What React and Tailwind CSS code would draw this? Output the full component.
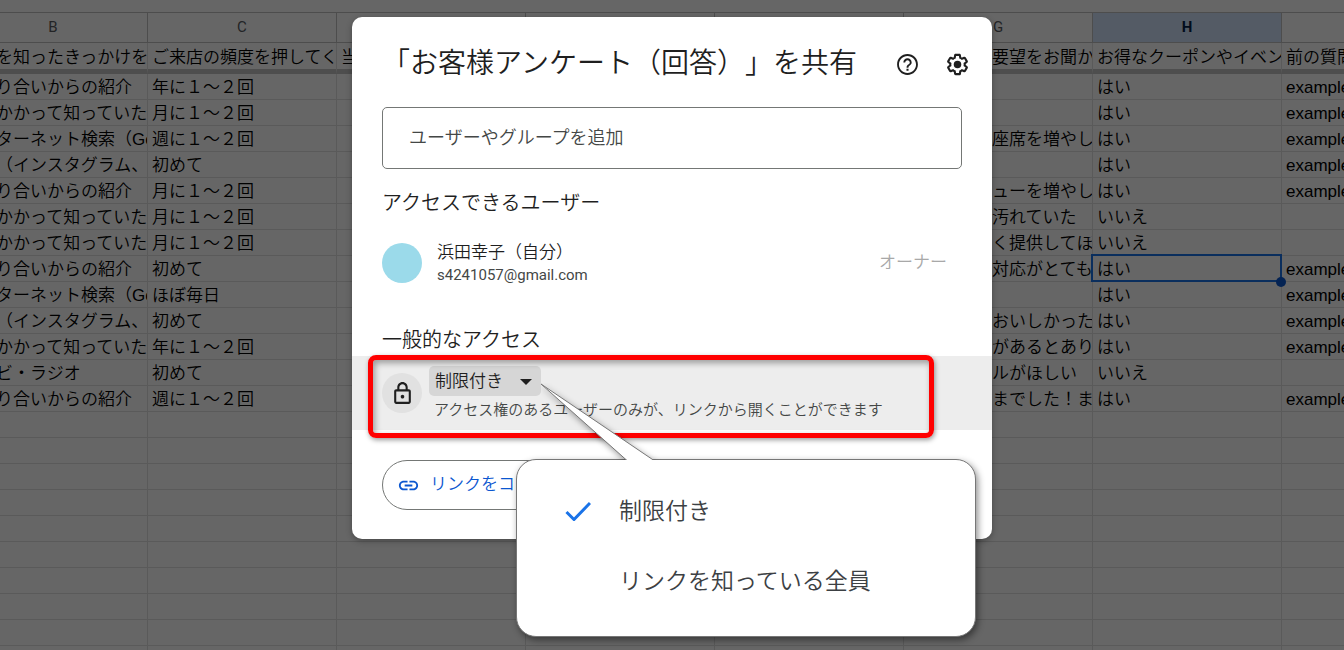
import { useState } from 'react';

const COLUMNS = ['B', 'C', 'D', 'E', 'F', 'G', 'H', 'I'];

const QUESTIONS = {
  B: 'を知ったきっかけを',
  C: 'ご来店の頻度を押してく',
  D: '当',
  G: '要望をお聞か',
  H: 'お得なクーポンやイベン',
  I: '前の質問',
};

const ANSWERS = [
  { B: 'り合いからの紹介', C: '年に１～２回', H: 'はい', I: 'example' },
  { B: 'かかって知っていた', C: '月に１～２回', H: 'はい', I: 'example' },
  { B: 'ターネット検索（Go', C: '週に１～２回', G: '座席を増やし', H: 'はい', I: 'example' },
  { B: '（インスタグラム、', C: '初めて', H: 'はい', I: 'example' },
  { B: 'り合いからの紹介', C: '月に１～２回', G: 'ューを増やし', H: 'はい', I: 'example' },
  { B: 'かかって知っていた', C: '月に１～２回', G: '汚れていた', H: 'いいえ' },
  { B: 'かかって知っていた', C: '月に１～２回', G: 'く提供してほ', H: 'いいえ' },
  { B: 'り合いからの紹介', C: '初めて', G: '対応がとても', H: 'はい', I: 'example' },
  { B: 'ターネット検索（Go', C: 'ほぼ毎日', H: 'はい', I: 'example' },
  { B: '（インスタグラム、', C: '初めて', G: 'おいしかった', H: 'はい', I: 'example' },
  { B: 'かかって知っていた', C: '年に１～２回', G: 'があるとあり', H: 'はい', I: 'example' },
  { B: 'ビ・ラジオ', C: '初めて', G: 'ルがほしい', H: 'いいえ' },
  { B: 'り合いからの紹介', C: '週に１～２回', G: 'までした！ま', H: 'はい', I: 'example' },
];

// Blank rows below the answers
const ROWS = [...ANSWERS, ...Array.from({ length: 12 }, () => ({}))];

const SELECTED = { row: 7, column: 'H' };

const cellPadding = (column) => {
  if (column === 'B') return 'pl-[37px]';
  if (column === 'G') return 'pl-[88px]';
  return 'pl-1';
};

function Sheet() {
  return (
    <div className="h-full overflow-hidden bg-white pt-3">
      <table className="-ml-[41px] w-[1512px] table-fixed border-separate border-spacing-0 border-t border-[#c0c0c0] text-[17px] leading-[23px] text-black">
        <thead>
          <tr className="h-[30px]">
            {COLUMNS.map((column) => (
              <th
                key={column}
                className={`border-r border-b border-[#c0c0c0] p-0 font-[Roboto] text-[15px] ${
                  column === SELECTED.column ? 'bg-[#d3e3fd] font-bold text-[#041e49]' : 'font-normal text-[#575b5f]'
                }`}
              >
                {column}
              </th>
            ))}
          </tr>
        </thead>
        <tbody>
          <tr className="h-[31px]">
            {COLUMNS.map((column) => (
              <td
                key={column}
                className={`overflow-hidden border-r border-b-[5px] border-r-[#e1e1e1] border-b-[#c4c4c4] pt-0.5 pr-0 pb-0 whitespace-nowrap ${cellPadding(column)}`}
              >
                {QUESTIONS[column]}
              </td>
            ))}
          </tr>
          {ROWS.map((row, index) => (
            <tr key={index} className="h-[26px]">
              {COLUMNS.map((column) => {
                const selected = index === SELECTED.row && column === SELECTED.column;
                return (
                  <td
                    key={column}
                    className={`relative border-r border-b border-[#e1e1e1] pt-0.5 pr-0 pb-0 whitespace-nowrap ${
                      selected ? '' : 'overflow-hidden'
                    } ${cellPadding(column)}`}
                  >
                    {row[column]}
                    {selected && (
                      <>
                        <span className="absolute -inset-0.5 -right-px -bottom-px border-2 border-[#1a73e8]" />
                        <span className="absolute -right-[5px] -bottom-1.5 z-10 size-2.5 rounded-full bg-[#0b57d0]" />
                      </>
                    )}
                  </td>
                );
              })}
            </tr>
          ))}
        </tbody>
      </table>
    </div>
  );
}

function HelpIcon() {
  return (
    <svg viewBox="0 0 24 24" className="size-[25px]" fill="currentColor">
      <path d="M11 18h2v-2h-2v2zm1-16C6.48 2 2 6.48 2 12s4.48 10 10 10 10-4.48 10-10S17.52 2 12 2zm0 18.200c-4.520 0-8.200-3.680-8.200-8.200s3.680-8.200 8.200-8.200 8.200 3.680 8.200 8.200-3.680 8.200-8.200 8.200zm0-14.200c-2.210 0-4 1.790-4 4h1.800c0-1.200 1-2.200 2.200-2.200s2.200 1 2.200 2.200c0 2-3.100 1.750-3.100 5h1.800c0-2.250 3.100-2.500 3.100-5 0-2.210-1.790-4-4-4z" />
    </svg>
  );
}

function SettingsIcon() {
  return (
    <svg viewBox="0 0 24 24" className="size-[25px]" fill="currentColor">
      <path d="M13.85 22.25h-3.7c-.74 0-1.36-.54-1.45-1.27l-.27-1.89c-.27-.14-.53-.29-.79-.46l-1.8.72c-.7.26-1.47-.03-1.81-.65L2.2 15.53c-.35-.66-.2-1.44.36-1.88l1.53-1.19c-.01-.15-.02-.3-.02-.46 0-.15.01-.31.02-.46l-1.52-1.19c-.59-.45-.74-1.26-.37-1.88l1.85-3.19c.34-.62 1.11-.9 1.79-.63l1.81.73c.26-.17.52-.32.78-.46l.27-1.91c.09-.7.71-1.25 1.44-1.25h3.7c.74 0 1.36.54 1.45 1.27l.27 1.89c.27.14.53.29.79.46l1.8-.72c.71-.26 1.48.03 1.82.65l1.84 3.18c.36.66.2 1.44-.36 1.88l-1.52 1.19c.01.15.02.3.02.46s-.01.31-.02.46l1.52 1.19c.56.45.72 1.23.37 1.86l-1.86 3.22c-.34.62-1.11.9-1.8.63l-1.8-.72c-.26.17-.52.32-.78.46l-.27 1.91c-.1.68-.72 1.22-1.46 1.22zm-3.23-2h2.76l.37-2.55.53-.22c.44-.18.88-.44 1.34-.78l.45-.34 2.38.96 1.38-2.4-2.03-1.58.07-.56c.03-.26.06-.51.06-.78s-.03-.53-.06-.78l-.07-.56 2.03-1.58-1.39-2.4-2.39.96-.45-.35c-.42-.32-.87-.58-1.33-.77l-.52-.22-.37-2.55h-2.76l-.37 2.55-.53.21c-.44.19-.88.44-1.34.79l-.45.33-2.38-.95-1.39 2.39 2.03 1.58-.07.56a7 7 0 0 0-.06.79c0 .26.02.53.06.78l.07.56-2.03 1.58 1.38 2.4 2.39-.96.45.35c.43.33.86.58 1.33.77l.53.22.38 2.55z" />
      <circle cx="12" cy="12" r="3.6" />
    </svg>
  );
}

function LockIcon() {
  return (
    <svg viewBox="0 0 24 24" className="size-[25px]" fill="currentColor">
      <path d="M18 8h-1V6c0-2.760-2.240-5-5-5S7 3.240 7 6v2H6c-1.100 0-2 .9-2 2v10c0 1.100.9 2 2 2h12c1.100 0 2-.9 2-2V10c0-1.100-.9-2-2-2zM9 6c0-1.660 1.340-3 3-3s3 1.340 3 3v2H9V6zm9 14H6V10h12v10zm-6-3.300c.94 0 1.700-.76 1.700-1.700s-.76-1.700-1.700-1.700-1.700.76-1.700 1.700.76 1.700 1.700 1.700z" />
    </svg>
  );
}

function LinkIcon() {
  return (
    <svg viewBox="0 0 24 24" className="size-[23px]" fill="currentColor">
      <path d="M3.900 12c0-1.710 1.390-3.100 3.100-3.100h4V7H7c-2.760 0-5 2.240-5 5s2.240 5 5 5h4v-1.900H7c-1.710 0-3.100-1.390-3.100-3.100zM8 13h8v-2H8v2zm9-6h-4v1.900h4c1.710 0 3.100 1.390 3.100 3.100s-1.390 3.100-3.100 3.100h-4V17h4c2.760 0 5-2.240 5-5s-2.240-5-5-5z" />
    </svg>
  );
}

function AccessMenu({ value, onChange }) {
  return (
    <div className="absolute top-[442px] left-[164px] w-[460px] rounded-[20px] border border-[#777] bg-white pt-4 pb-5 pl-12 text-[23px] text-[#3c4043] shadow-[2px_3px_7px_rgba(0,0,0,0.45)]">
      {/* Pointer up to the access drop-down */}
      <svg className="absolute -top-[77px] left-6 h-[77px] w-[125px] overflow-hidden" viewBox="0 0 125 77">
        <path d="M86 77.500L0 1L113 77.500" fill="#fff" stroke="#777" strokeWidth="1" className="drop-shadow-[2px_3px_3px_rgba(0,0,0,0.4)]" />
      </svg>
      {['制限付き', 'リンクを知っている全員'].map((option) => (
        <button key={option} type="button" onClick={() => onChange(option)} className="flex h-[70px] w-full items-center gap-7 text-left">
          <svg viewBox="0 0 26 20" className="h-5 w-[26px]" fill="none" stroke="#1a73e8" strokeWidth="3">
            {value === option && <path d="M1.500 11L9 18.500L25 2" />}
          </svg>
          {option}
        </button>
      ))}
    </div>
  );
}

function ShareDialog() {
  const [access, setAccess] = useState('制限付き');

  return (
    <div role="dialog" aria-labelledby="share-title" className="relative w-[640px] rounded-[10px] bg-white pt-6 pb-[29px] text-[#1f1f1f] shadow-[0_2px_6px_rgba(0,0,0,0.3)]">
      <div className="flex h-[46px] items-center pr-[22px] pl-[30px]">
        <h1 id="share-title" className="flex-1 text-[28px] whitespace-nowrap">「お客様アンケート（回答）」を共有</h1>
        <div className="flex gap-[25px]">
          <button type="button" aria-label="ヘルプ"><HelpIcon /></button>
          <button type="button" aria-label="設定"><SettingsIcon /></button>
        </div>
      </div>

      <div className="px-[30px] pt-5">
        <input
          type="text"
          aria-label="ユーザーやグループを追加"
          placeholder="ユーザーやグループを追加"
          className="h-[62px] w-full rounded-[5px] border border-[#747775] px-[26px] text-[18px] placeholder:text-[#444746]"
        />
        <h2 className="mt-[19px] text-[20px] leading-[30px]">アクセスできるユーザー</h2>
        <div className="mt-[23px] flex h-[44px] items-center">
          <div className="size-10 rounded-full bg-[#9bdaea]" />
          <div className="ml-[15px] flex-1">
            <p className="text-[17px] leading-6">浜田幸子（自分）</p>
            <p className="font-[Roboto] text-[15px] leading-5 font-normal text-[#444746]">s4241057@gmail.com</p>
          </div>
          <p className="mr-[15px] text-[17px] text-[#a8a8a8]">オーナー</p>
        </div>
        <h2 className="mt-10 text-[20px] leading-[30px]">一般的なアクセス</h2>
      </div>

      <div className="relative mt-px flex h-[74px] bg-[#ededed] pl-[30px]">
        <div className="mt-[17px] flex size-10 items-center justify-center rounded-full bg-[#e1e1e1]">
          <LockIcon />
        </div>
        <div className="mt-[10px] ml-[7px]">
          <button type="button" aria-haspopup="listbox" className="flex h-[30px] w-28 items-center justify-between rounded-[5px] bg-[#d6d6d6] pt-0.5 pr-[9px] pl-[6px] text-[17px]">
            {access}
            <svg viewBox="0 0 12 6" className="h-[6px] w-3" fill="currentColor">
              <path d="M0 0h12L6 6z" />
            </svg>
          </button>
          <p className="pl-[5px] text-[15px] leading-7 text-[#444746]">アクセス権のあるユーザーのみが、リンクから開くことができます</p>
        </div>
        <div className="absolute -top-px left-4 h-[83px] w-[566px] rounded-[8px] border-5 border-[#ff0000] shadow-[1px_2px_5px_rgba(0,0,0,0.4),inset_2px_3px_6px_rgba(0,0,0,0.35)]" />
      </div>

      <div className="mt-[30px] pl-[30px]">
        <button type="button" className="flex h-[50px] items-center gap-2.5 rounded-full border border-[#747775] pr-6 pl-[14px] text-[17px] text-[#0b57d0]">
          <LinkIcon />
          リンクをコピー
        </button>
      </div>

      <AccessMenu value={access} onChange={setAccess} />
    </div>
  );
}

export default function App() {
  return (
    <div className="relative h-screen overflow-hidden font-['Liberation_Sans','Noto_Sans_CJK_JP',sans-serif] font-[350] [text-spacing-trim:space-all]">
      <Sheet />
      <div className="absolute inset-0 z-20 flex items-start justify-center bg-black/60 pt-[17px]">
        <ShareDialog />
      </div>
    </div>
  );
}
